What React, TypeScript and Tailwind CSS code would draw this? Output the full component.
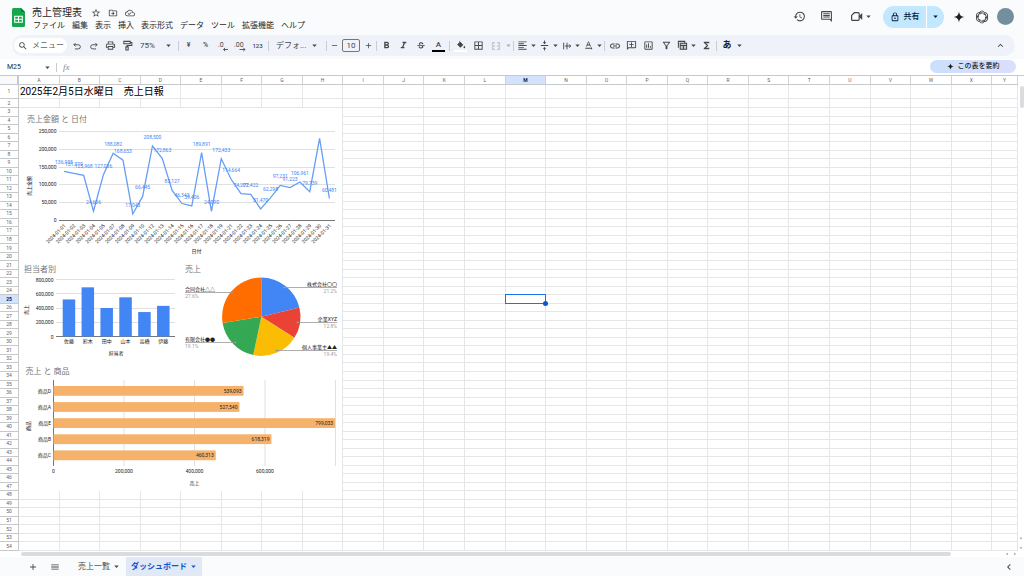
import type { ReactNode } from 'react';
import {
  MdAdd,
  MdArrowDropDown,
  MdArrowDropUp,
  MdArrowLeft,
  MdArrowRight,
  MdBorderAll,
  MdChevronLeft,
  MdExpandLess,
  MdFormatAlignLeft,
  MdFormatBold,
  MdFormatColorFill,
  MdFormatItalic,
  MdFunctions,
  MdHistory,
  MdLink,
  MdMenu,
  MdOutlineAddComment,
  MdOutlineAssessment,
  MdOutlineCloudDone,
  MdOutlineDriveFileMove,
  MdOutlineFilterAlt,
  MdOutlineInsertComment,
  MdOutlineLock,
  MdOutlinePrint,
  MdRemove,
  MdSearch,
  MdStarBorder,
  MdStrikethroughS,
  MdTextRotationNone,
  MdVerticalAlignCenter,
} from 'react-icons/md';

const COLUMNS = 'ABCDEFGHIJKLMNOPQRSTUVWXY'.split('');
const ROWS = Array.from({ length: 54 }, (_, i) => i + 1);
const ROW_GRID = 'grid grid-cols-[19px_repeat(24,minmax(0,11fr))_minmax(0,7fr)]';
const MENUS = ['ファイル', '編集', '表示', '挿入', '表示形式', 'データ', 'ツール', '拡張機能', 'ヘルプ'];

function Tool({ label, width = 'w-[17px]', children }: { label: string; width?: string; children: ReactNode }) {
  return (
    <button type="button" aria-label={label} className={`flex h-4 shrink-0 items-center justify-center ${width}`}>
      {children}
    </button>
  );
}

function DropTool({ label, width = 'w-[22px]', children }: { label: string; width?: string; children: ReactNode }) {
  return (
    <button type="button" aria-label={label} className={`flex h-4 shrink-0 items-center ${width}`}>
      <span className="flex flex-1 items-center justify-center">{children}</span>
      <Caret />
    </button>
  );
}

function Caret() {
  return (
    <svg viewBox="0 0 7 7" className="size-[7px] shrink-0" aria-hidden="true">
      <path d="M1.3 2.4h4.4L3.5 4.9z" fill="currentColor" />
    </svg>
  );
}

function Divider() {
  return <span className="mx-px h-[10px] w-px shrink-0 bg-[#c9cdd3]" />;
}

function Stroke({ children, className = 'size-[10px]' }: { children: ReactNode; className?: string }) {
  return (
    <svg viewBox="0 0 24 24" className={className} fill="none" stroke="currentColor" strokeWidth="2.2" aria-hidden="true">
      {children}
    </svg>
  );
}

function Decimals({ digits, left }: { digits: string; left: boolean }) {
  return (
    <svg viewBox="0 0 12 12" className="size-3" aria-hidden="true">
      <text x={left ? 1 : 0} y="7" fontSize="7" fill="currentColor">
        {digits}
      </text>
      <path
        d={left ? 'M11 9.5H6.5M8.2 7.8 6.5 9.5l1.7 1.7' : 'M5.5 9.5H11M9.3 7.8l1.7 1.7-1.7 1.7'}
        fill="none"
        stroke="currentColor"
        strokeWidth="0.9"
      />
    </svg>
  );
}

function Sparkle({ className }: { className: string }) {
  return (
    <svg viewBox="0 0 24 24" className={className} aria-hidden="true">
      <path d="M12 1c1 7 4 10 11 11-7 1-10 4-11 11-1-7-4-10-11-11 7-1 10-4 11-11z" fill="currentColor" />
    </svg>
  );
}

function Swirl({ className }: { className: string }) {
  return (
    <svg viewBox="0 0 24 24" className={className} fill="none" stroke="currentColor" strokeWidth="1.6" strokeLinecap="round" aria-hidden="true">
      {[0, 60, 120, 180, 240, 300].map((a) => (
        <path key={a} transform={`rotate(${a} 12 12)`} d="M7.500 4C10 .600 15.500 1 17.200 5.200M9.200 6.800c2.200-2.600 6-2.600 8.600.600" />
      ))}
    </svg>
  );
}

function Header() {
  return (
    <header className="flex h-[35px] items-center pl-3 pr-[10px]">
      <svg viewBox="0 0 13 19" className="h-[19px] w-[13px] shrink-0" aria-label="スプレッドシート">
        <path d="M1.500 0H9l4 4v13.500a1.500 1.500 0 0 1-1.500 1.500h-10A1.500 1.500 0 0 1 0 17.500v-16A1.500 1.500 0 0 1 1.500 0z" fill="#12a84b" />
        <path d="M9 0l4 4H9z" fill="#0a7d35" />
        <path d="M2.700 8.200h7.600v6H2.700zM6.500 8.200v6M2.700 11.200h7.600" fill="none" stroke="#fff" strokeWidth="1.100" />
      </svg>
      <div className="ml-[7px] flex flex-col pt-[3px]">
        <div className="flex h-[13px] items-center text-[#444746]">
          <h1 className="mr-[9px] text-[10px] leading-none text-[#1f1f1f]">売上管理表</h1>
          <div className="flex gap-[7px]">
            <button type="button" aria-label="スター">
              <MdStarBorder className="size-[10px]" />
            </button>
            <button type="button" aria-label="移動">
              <MdOutlineDriveFileMove className="size-[10px]" />
            </button>
            <button type="button" aria-label="保存状況">
              <MdOutlineCloudDone className="size-[10px]" />
            </button>
          </div>
        </div>
        <nav className="flex gap-[7px] pl-px text-[8px] leading-3 text-[#1f1f1f]">
          {MENUS.map((m) => (
            <button type="button" key={m}>
              {m}
            </button>
          ))}
        </nav>
      </div>
      <div className="mb-[2px] ml-auto flex h-[22px] items-center text-[#444746]">
        <button type="button" aria-label="変更履歴" className="mr-[14px]">
          <MdHistory className="size-[13px]" />
        </button>
        <button type="button" aria-label="コメント" className="mr-[17px]">
          <MdOutlineInsertComment className="size-[13px]" />
        </button>
        <button type="button" aria-label="会議" className="mr-[11px] flex items-center gap-[2px]">
          <Stroke className="size-[13px]">
            <path d="M8 5h7a2 2 0 0 1 2 2v10a2 2 0 0 1-2 2H4a1 1 0 0 1-1-1v-8z" />
            <path d="m17.500 12 4-4v8z" fill="currentColor" />
          </Stroke>
          <Caret />
        </button>
        <div className="mr-[9px] flex h-[22px] overflow-hidden rounded-full bg-[#c2e7ff] text-[#001d35]">
          <button type="button" className="flex w-[43px] items-center justify-center gap-1 text-[8px] font-medium">
            <MdOutlineLock className="size-[10px]" />
            共有
          </button>
          <button type="button" aria-label="共有オプション" className="flex w-[18px] items-center justify-center border-l border-white">
            <Caret />
          </button>
        </div>
        <button type="button" aria-label="Gemini" className="mr-[10px]">
          <Sparkle className="size-3 text-[#1f1f1f]" />
        </button>
        <button type="button" aria-label="アシスタント" className="mr-2">
          <Swirl className="size-[14px]" />
        </button>
        <button type="button" aria-label="アカウント" className="size-[17px] rounded-full bg-[#738f9c]" />
      </div>
    </header>
  );
}

function Toolbar() {
  return (
    <div role="toolbar" className="ml-3 mr-[9px] flex h-[21px] items-center rounded-full bg-[#eff3f9] pl-[2px] text-[#444746]">
      <label className="mr-px flex h-[15px] w-[53px] shrink-0 items-center gap-1 rounded-full bg-white pl-1">
        <MdSearch className="size-[10px] shrink-0" />
        <input aria-label="メニューを検索" placeholder="メニュー" className="w-8 bg-transparent text-[8px] outline-none placeholder:text-[#5f6368]" />
      </label>
      <Tool label="元に戻す">
        <Stroke>
          <path d="M8.500 5 4.500 9l4 4M4.500 9H15a5 5 0 0 1 0 10H7" />
        </Stroke>
      </Tool>
      <Tool label="やり直す">
        <Stroke>
          <path d="m15.500 5 4 4-4 4M19.500 9H9a5 5 0 0 0 0 10h8" />
        </Stroke>
      </Tool>
      <Tool label="印刷">
        <MdOutlinePrint className="size-[11px]" />
      </Tool>
      <Tool label="書式を貼り付け">
        <Stroke className="size-[11px]">
          <path d="M4 3h14v5H4zM18 5.500h3.500V12H11v3M8.500 15h5v7h-5z" />
        </Stroke>
      </Tool>
      <span className="flex w-[41px] shrink-0 items-center pl-1">
        <select aria-label="ズーム" className="w-[25px] appearance-none bg-transparent text-[8px]">
          <option>75%</option>
        </select>
        <Caret />
      </span>
      <Divider />
      <Tool label="通貨">
        <span className="text-[7px] font-medium">¥</span>
      </Tool>
      <Tool label="パーセント">
        <span className="text-[7px] font-medium">%</span>
      </Tool>
      <Tool label="小数点以下を減らす">
        <Decimals digits=".0" left />
      </Tool>
      <Tool label="小数点以下を増やす">
        <Decimals digits=".00" left={false} />
      </Tool>
      <Tool label="表示形式の詳細" width="w-[19px]">
        <span className="text-[6px] font-medium">123</span>
      </Tool>
      <Divider />
      <span className="flex w-[55px] shrink-0 items-center gap-[3px] pl-[6px]">
        <select aria-label="フォント" className="w-8 appearance-none bg-transparent text-[8px]">
          <option>デフォ...</option>
        </select>
        <Caret />
      </span>
      <Divider />
      <Tool label="小さく" width="w-[13px]">
        <MdRemove className="size-[9px]" />
      </Tool>
      <input
        aria-label="フォントサイズ"
        defaultValue="10"
        className="mx-px h-[13px] w-[18px] shrink-0 rounded-[2px] border border-[#747775] bg-transparent text-center text-[8px] leading-none"
      />
      <Tool label="大きく" width="w-[14px]">
        <MdAdd className="size-[9px]" />
      </Tool>
      <Divider />
      <Tool label="太字">
        <MdFormatBold className="size-[11px]" />
      </Tool>
      <Tool label="斜体">
        <MdFormatItalic className="size-[11px]" />
      </Tool>
      <Tool label="取り消し線">
        <MdStrikethroughS className="size-[10px]" />
      </Tool>
      <Tool label="テキストの色" width="w-[19px]">
        <span className="w-[13px] border-b-2 border-black text-[8px] font-medium leading-[10px]">A</span>
      </Tool>
      <Divider />
      <Tool label="塗りつぶしの色" width="w-[19px]">
        <span className="flex w-[13px] justify-center border-b-2 border-white">
          <Stroke className="size-[10px]">
            <path d="M8 3l8.500 8.500-6 6L4 11l6-6" fill="currentColor" />
            <path d="M20 14c1.500 2 2 3 2 4a2 2 0 0 1-4 0c0-1 .500-2 2-4z" fill="currentColor" stroke="none" />
          </Stroke>
        </span>
      </Tool>
      <Tool label="枠線">
        <MdBorderAll className="size-[11px]" />
      </Tool>
      <span className="flex text-[#a9adb2]">
        <DropTool label="セルを結合" width="w-[25px]">
          <Stroke>
            <path d="M9 4H4v5M4 15v5h5M15 4h5v5M20 15v5h-5M2 12h7M22 12h-7" />
          </Stroke>
        </DropTool>
      </span>
      <Divider />
      <DropTool label="水平方向の配置">
        <MdFormatAlignLeft className="size-[11px]" />
      </DropTool>
      <DropTool label="垂直方向の配置">
        <MdVerticalAlignCenter className="size-[11px]" />
      </DropTool>
      <DropTool label="折り返し">
        <Stroke>
          <path d="M4 4v16M12 4v16M7 12h14M17 8l4 4-4 4" />
        </Stroke>
      </DropTool>
      <DropTool label="テキストの回転">
        <MdTextRotationNone className="size-[11px]" />
      </DropTool>
      <Divider />
      <Tool label="リンク">
        <MdLink className="size-[12px]" />
      </Tool>
      <Tool label="コメントを挿入">
        <MdOutlineAddComment className="size-[11px] -scale-x-100" />
      </Tool>
      <Tool label="グラフを挿入">
        <MdOutlineAssessment className="size-[11px]" />
      </Tool>
      <Tool label="フィルタ" width="w-[18px]">
        <MdOutlineFilterAlt className="size-[11px]" />
      </Tool>
      <DropTool label="フィルタ表示">
        <Stroke className="size-[11px]">
          <path d="M3 17V3h14v4" />
          <path d="M7 7h14v13H7zM7 12h14M14 12v8" fill="#c4c7cb" />
        </Stroke>
      </DropTool>
      <Tool label="関数" width="w-[18px]">
        <MdFunctions className="size-[11px]" />
      </Tool>
      <Divider />
      <DropTool label="入力ツール" width="w-[25px]">
        <span className="text-[9px] font-bold leading-none text-[#1f1f1f]">あ</span>
      </DropTool>
      <span className="ml-auto mr-[6px] flex">
        <Tool label="メニューを非表示">
          <MdExpandLess className="size-[11px]" />
        </Tool>
      </span>
    </div>
  );
}

function FormulaBar() {
  return (
    <div className="mt-[3px] flex h-4 items-center bg-white pr-2 pt-px text-[#444746]">
      <input aria-label="名前ボックス" defaultValue="M25" className="w-[37px] bg-transparent pl-[7px] text-[7px] text-[#1f1f1f] outline-none" />
      <button type="button" aria-label="名前付き範囲" className="ml-[7px]">
        <Caret />
      </button>
      <span className="ml-[5px] h-[9px] w-px bg-[#c9cdd3]" />
      <label htmlFor="formula" className="ml-[6px] font-['Liberation_Serif',serif] text-[9px] italic leading-none text-[#80868b]">
        fx
      </label>
      <input id="formula" className="min-w-0 flex-1 bg-transparent px-2 text-[7px] outline-none" />
      <button
        type="button"
        className="mb-[2px] flex h-[13px] w-[86px] items-center justify-center gap-1 rounded-full bg-linear-to-r from-[#cbdffc] to-[#dadffc] text-[7px] font-medium text-[#1f1f1f]"
      >
        <Sparkle className="size-[7px]" />
        この表を要約
      </button>
    </div>
  );
}

const SALES: [string, number, string][] = [
  ['2024-01-01', 136935, '136,935'],
  ['2024-01-02', 131379, '131,379'],
  ['2024-01-03', 125968, '125,968'],
  ['2024-01-04', 24606, '24,606'],
  ['2024-01-05', 127036, '127,036'],
  ['2024-01-07', 188082, '188,082'],
  ['2024-01-08', 168653, '168,653'],
  ['2024-01-09', 17043, '17,043'],
  ['2024-01-10', 66445, '66,445'],
  ['2024-01-12', 208500, '208,500'],
  ['2024-01-13', 172863, '172,863'],
  ['2024-01-14', 83127, '83,127'],
  ['2024-01-15', 46343, '46,343'],
  ['2024-01-16', 39406, '39,406'],
  ['2024-01-17', 189891, '189,891'],
  ['2024-01-18', 24090, '24,090'],
  ['2024-01-19', 172433, '172,433'],
  ['2024-01-21', 114664, '114,664'],
  ['2024-01-22', 74207, '74,207'],
  ['2024-01-23', 72422, '72,422'],
  ['2024-01-24', 31470, '31,470'],
  ['2024-01-25', 62298, '62,298'],
  ['2024-01-26', 97231, '97,231'],
  ['2024-01-27', 91223, '91,223'],
  ['2024-01-28', 106961, '106,961'],
  ['2024-01-29', 79739, '79,739'],
  ['2024-01-30', 230000, ''],
  ['2024-01-31', 60481, '60,481'],
];

function LineChart() {
  const x = (i: number) => 64 + i * 9.83;
  const y = (v: number) => 220 - (v * 88.8) / 250000;
  return (
    <svg viewBox="19 108 323 154" className="h-[154px] w-[323px]" fontSize="5" fill="#222">
      <text x="27" y="122" fontSize="8" fill="#757575">
        売上金額 と 日付
      </text>
      {[0, 50000, 100000, 150000, 200000, 250000].map((v) => (
        <g key={v}>
          <path d={`M59 ${Math.round(y(v)) + 0.5}H335`} stroke={v ? '#e0e0e0' : '#777'} />
          <text x="56.500" y={y(v) + 2} textAnchor="end">
            {v.toLocaleString('en-US')}
          </text>
        </g>
      ))}
      <polyline points={SALES.map(([, v], i) => `${x(i)},${y(v)}`).join(' ')} fill="none" stroke="#669df6" strokeWidth="1.3" />
      {SALES.map(([d, v, label], i) => (
        <g key={d}>
          <text x={x(i)} y={y(v) - 7} textAnchor="middle" fill="#4285f4">
            {label}
          </text>
          <text transform={`translate(${x(i) + 2} 226) rotate(-45)`} textAnchor="end">
            {d}
          </text>
        </g>
      ))}
      <text x="196.500" y="253" textAnchor="middle">
        日付
      </text>
      <text transform="translate(31 186) rotate(-90)" textAnchor="middle">
        売上金額
      </text>
    </svg>
  );
}

const STAFF: [string, number][] = [
  ['佐藤', 520000],
  ['鈴木', 690000],
  ['田中', 400000],
  ['山本', 550000],
  ['高橋', 343000],
  ['伊藤', 430000],
];

function StaffChart() {
  const y = (v: number) => 336.5 - (v * 57) / 800000;
  return (
    <svg viewBox="19 262 162 104" className="h-[104px] w-[162px]" fontSize="5" fill="#222">
      <text x="24" y="272" fontSize="8" fill="#757575">
        担当者別
      </text>
      {[0, 200000, 400000, 600000, 800000].map((v) => (
        <g key={v}>
          <path d={`M56 ${Math.floor(y(v)) + 0.5}H175`} stroke={v ? '#e0e0e0' : '#777'} />
          <text x="53.500" y={y(v) + 2} textAnchor="end">
            {v.toLocaleString('en-US')}
          </text>
        </g>
      ))}
      {STAFF.map(([name, v], i) => (
        <g key={name}>
          <rect x={62.7 + i * 18.87} y={y(v)} width="12.500" height={336.5 - y(v)} fill="#4285f4" />
          <text x={69 + i * 18.87} y="343" textAnchor="middle">
            {name}
          </text>
        </g>
      ))}
      <text x="116" y="355" textAnchor="middle">
        担当者
      </text>
      <text transform="translate(28 310) rotate(-90)" textAnchor="middle">
        売上
      </text>
    </svg>
  );
}

const SLICES: [number, string][] = [
  [21.2, '#4285f4'],
  [12.8, '#ea4335'],
  [19.3, '#fbbc04'],
  [19.1, '#34a853'],
  [27.6, '#ff6d01'],
];

const PIE_LABELS = [
  { name: '株式会社〇〇', pct: '21.2%', right: true, y: 287.5, x: 284 },
  { name: '企業XYZ', pct: '12.8%', right: true, y: 322.5, x: 297.5 },
  { name: '個人事業主▲▲', pct: '19.4%', right: true, y: 350.5, x: 276.5 },
  { name: '合同会社△△', pct: '27.6%', right: false, y: 292.5, x: 232 },
  { name: '有限会社●●', pct: '19.1%', right: false, y: 342.5, x: 235.5 },
];

function PieChart() {
  const cx = 261.3;
  const cy = 316.7;
  const r = 39.2;
  let sum = 0;
  const at = (p: number) => {
    const a = (p / 100) * Math.PI * 2;
    return `${cx + r * Math.sin(a)} ${cy - r * Math.cos(a)}`;
  };
  return (
    <svg viewBox="181 262 161 104" className="h-[104px] w-[161px]" fontSize="5">
      <text x="185" y="272" fontSize="8" fill="#757575">
        売上
      </text>
      {SLICES.map(([p, color]) => {
        const from = sum;
        sum += p;
        return <path key={color} d={`M${cx} ${cy}L${at(from)}A${r} ${r} 0 0 1 ${at(sum)}Z`} fill={color} />;
      })}
      {PIE_LABELS.map((l) => {
        const edge = l.right ? 337 : 185;
        const anchor = l.right ? 'end' : 'start';
        return (
          <g key={l.name}>
            <path d={`M${l.x} ${l.y}H${edge}`} stroke="#999" strokeWidth="0.8" />
            <circle cx={l.x} cy={l.y} r="1" fill="#999" />
            <text x={edge} y={l.y - 1.5} textAnchor={anchor} fill="#222">
              {l.name}
            </text>
            <text x={edge} y={l.y + 5} textAnchor={anchor} fill="#9e9e9e">
              {l.pct}
            </text>
          </g>
        );
      })}
    </svg>
  );
}

const PRODUCTS: [string, number][] = [
  ['商品D', 539093],
  ['商品A', 527540],
  ['商品E', 799033],
  ['商品B', 618319],
  ['商品C', 460313],
];

function ProductChart() {
  const x = (v: number) => 53.5 + (v * 282) / 800000;
  return (
    <svg viewBox="19 366 323 125" className="h-[125px] w-[323px]" fontSize="5" fill="#222">
      <text x="25.500" y="373.500" fontSize="8" fill="#757575">
        売上 と 商品
      </text>
      {[0, 200000, 400000, 600000, 800000].map((v) => (
        <g key={v}>
          <path d={`M${x(v)} 380V466`} stroke={v ? '#e0e0e0' : '#777'} />
          {v < 800000 && (
            <text x={x(v)} y="472.500" textAnchor="middle">
              {v.toLocaleString('en-US')}
            </text>
          )}
        </g>
      ))}
      {PRODUCTS.map(([name, v], i) => (
        <g key={name}>
          <rect x="53.500" y={386 + i * 16.1} width={x(v) - 53.5} height="9.800" fill="#f6b26b" />
          <text x="51" y={392.7 + i * 16.1} textAnchor="end">
            {name}
          </text>
          <text x={x(v) - 2} y={392.7 + i * 16.1} textAnchor="end">
            {v.toLocaleString('en-US')}
          </text>
        </g>
      ))}
      <text x="194.500" y="485" textAnchor="middle">
        売上
      </text>
      <text transform="translate(30 426) rotate(-90)" textAnchor="middle">
        商品
      </text>
    </svg>
  );
}

function rowHeight(row: number) {
  if (row === 1) return 'h-[14px] shrink-0';
  if (row === 2) return 'h-[9px] shrink-0';
  return 'min-h-2 flex-1';
}

function Sheet() {
  return (
    <div className="relative flex min-w-0 flex-1 flex-col">
      <table className="flex flex-1 flex-col text-[5px] font-normal leading-none text-[#5f6368]">
        <thead className="block">
          <tr className={`h-[10px] border-y border-[#c7c9cb] ${ROW_GRID}`}>
            <td className="border-r-2 border-[#c7c9cb] bg-[#f8f9fa]" />
            {COLUMNS.map((c) => (
              <th
                key={c}
                scope="col"
                className={`flex items-center justify-center border-r border-[#d0d2d4] ${
                  c === 'M' ? 'bg-[#d3e3fd] font-bold text-[#041e49]' : 'font-normal'
                }`}
              >
                {c}
              </th>
            ))}
          </tr>
        </thead>
        <tbody className="flex flex-1 flex-col">
          {ROWS.map((row) => (
            <tr key={row} className={`${ROW_GRID} ${rowHeight(row)}`}>
              <th
                scope="row"
                className={`flex items-center justify-center border-b border-r border-[#c7c9cb] ${
                  row === 25 ? 'bg-[#d3e3fd] font-bold text-[#041e49]' : 'font-normal'
                }`}
              >
                {row}
              </th>
              {row === 1 && (
                <td colSpan={4} className="col-span-4 flex items-center whitespace-nowrap border-b border-r border-[#e5e6e7] pl-px pt-px text-[10px] text-black">
                  2025年2月5日水曜日　売上日報
                </td>
              )}
              {COLUMNS.slice(row === 1 ? 4 : 0).map((c) => (
                <td key={c} className="relative border-b border-r border-[#e5e6e7]">
                  {row === 25 && c === 'M' && (
                    <span className="absolute -inset-px z-10 border border-[#1a73e8]">
                      <span className="absolute -bottom-[3px] -right-[3px] size-[5px] rounded-full bg-[#0b57d0]" />
                    </span>
                  )}
                </td>
              ))}
            </tr>
          ))}
        </tbody>
      </table>
      <div className="absolute left-[19px] top-[33px] flex flex-col bg-white">
        <LineChart />
        <div className="flex">
          <StaffChart />
          <PieChart />
        </div>
        <ProductChart />
      </div>
    </div>
  );
}

export default function App() {
  return (
    <div className="flex min-h-screen flex-col overflow-hidden bg-[#f9fbfd] font-['Roboto','Noto_Sans_CJK_JP',sans-serif]">
      <Header />
      <Toolbar />
      <FormulaBar />
      <main className="flex flex-1 flex-col bg-white">
        <div className="flex flex-1">
          <Sheet />
          <div className="flex w-[6px] flex-col items-center border-t border-[#c7c9cb] pt-[10px] text-[#5f6368]">
            <span className="h-[22px] w-1 self-end rounded-full bg-[#dadce0]" />
            <MdArrowDropUp className="mt-auto size-[6px]" />
            <MdArrowDropDown className="mt-1 size-[6px]" />
          </div>
        </div>
        <div className="flex h-[6px] items-center bg-white pl-[21px] pr-[6px] text-[#5f6368]">
          <span className="mr-[53px] h-1 flex-1 rounded-full bg-[#dadce0]" />
          <MdArrowLeft className="size-[6px]" />
          <MdArrowRight className="ml-[2px] size-[6px]" />
        </div>
      </main>
      <footer className="flex h-[19px] items-stretch pl-7 text-[8px] text-[#444746]">
        <button type="button" aria-label="シートを追加" className="mr-3">
          <MdAdd className="size-[10px]" />
        </button>
        <button type="button" aria-label="すべてのシート" className="mr-[18px]">
          <MdMenu className="size-[10px]" />
        </button>
        <button type="button" className="flex items-center gap-[3px]">
          売上一覧
          <Caret />
        </button>
        <button type="button" className="ml-[6px] flex items-center gap-[3px] bg-[#e1e9f7] px-[5px] font-bold text-[#0b57d0]">
          ダッシュボード
          <Caret />
        </button>
        <button type="button" aria-label="サイドパネルを表示" className="ml-auto mr-[9px]">
          <MdChevronLeft className="size-3" />
        </button>
      </footer>
    </div>
  );
}
